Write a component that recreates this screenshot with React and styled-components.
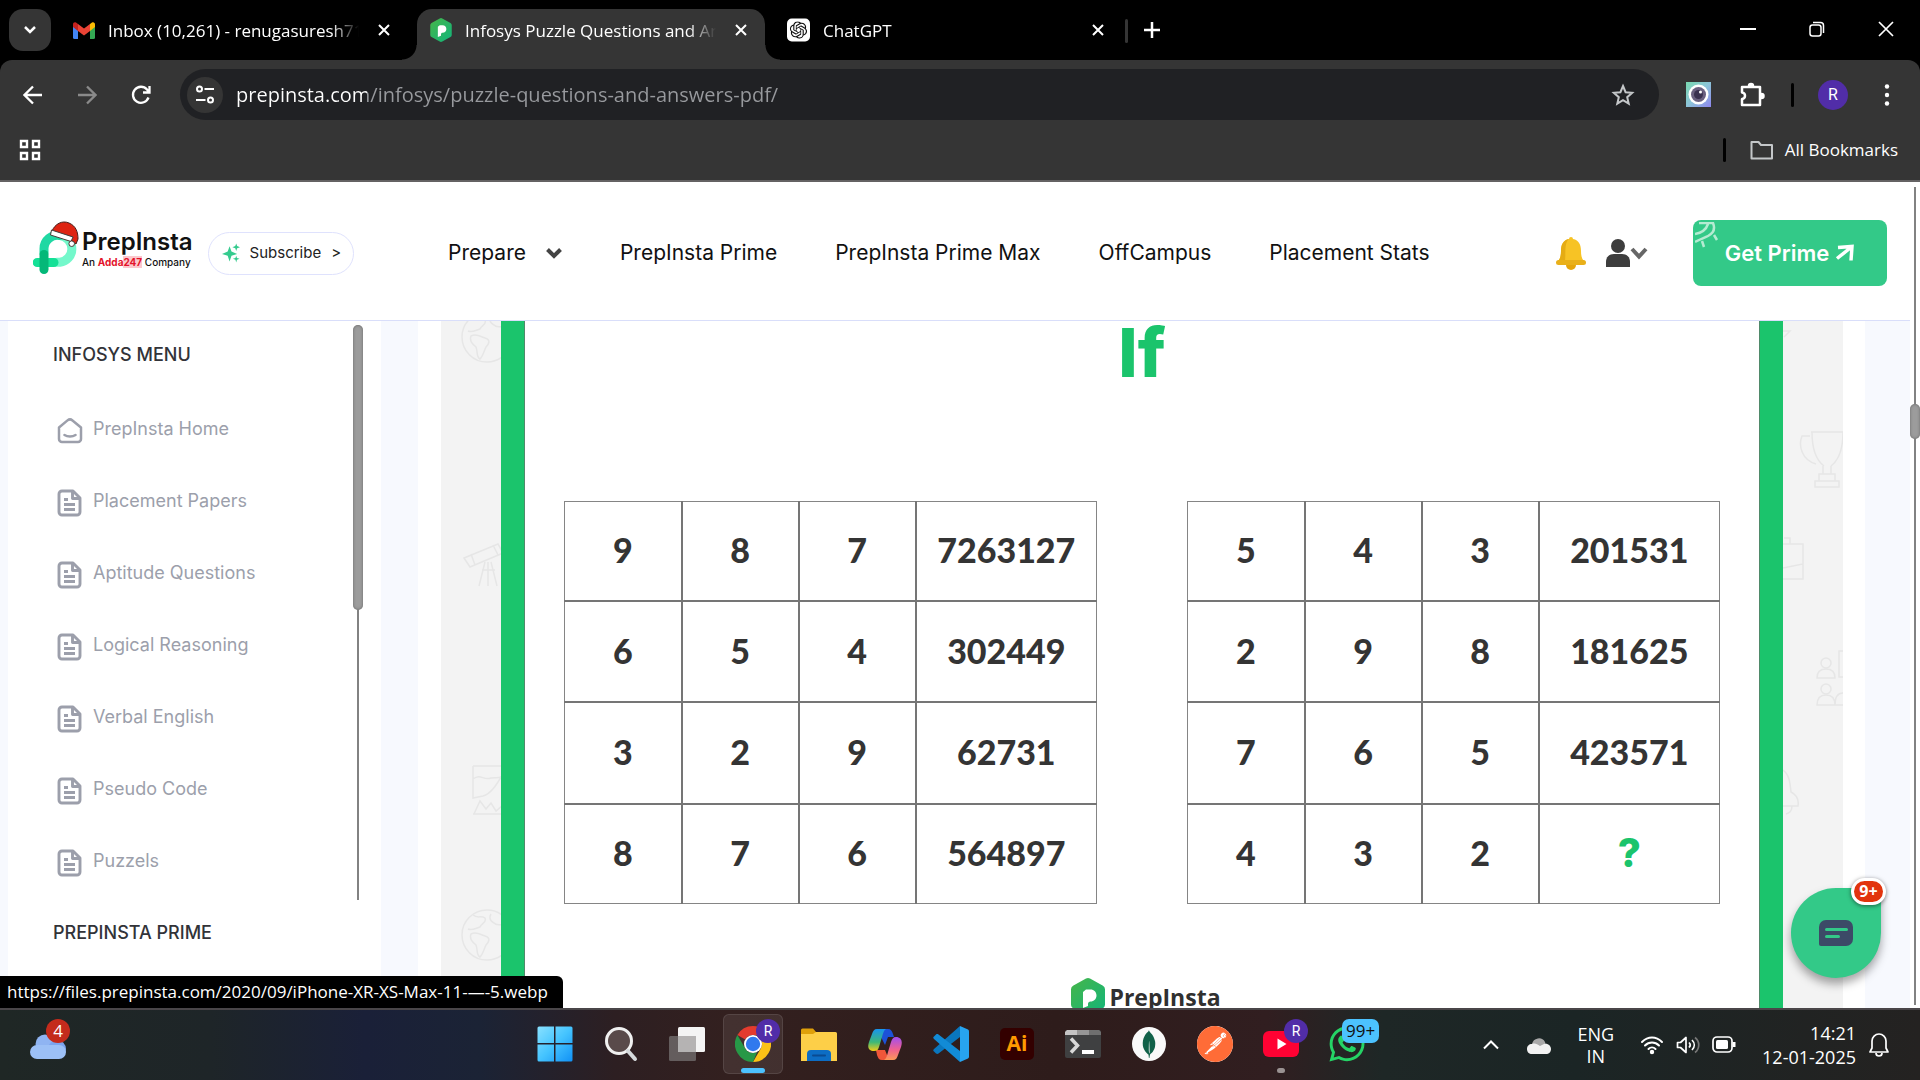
import React from "react";
import styled, { createGlobalStyle, css } from "styled-components";
import { SiOpenai, SiPostman, SiMongodb } from "react-icons/si";
import { FaWhatsapp } from "react-icons/fa";

const system = `"Open Sans", "Noto Sans", sans-serif`;
const site = `Inter, "Noto Sans", sans-serif`;

const Global = createGlobalStyle`
  *, *::before, *::after { box-sizing: border-box; }
  body { margin: 0; background: #000; font-family: ${system}; }
  button { border: 0; padding: 0; background: none; color: inherit; font: inherit; cursor: pointer; }
  a { color: inherit; text-decoration: none; }
  svg { display: block; flex: none; }
  ul { list-style: none; margin: 0; padding: 0; }
`;

const Screen = styled.div`
  display: flex;
  flex-direction: column;
  height: 100vh;
  overflow: hidden;
`;

/* ---------- browser chrome ---------- */

const TabStrip = styled.div`
  display: flex;
  align-items: stretch;
  height: 60px;
  padding-left: 9px;
  background: #000;
  color: #fff;
`;

const TabSearch = styled.button`
  display: grid;
  place-items: center;
  width: 42px;
  height: 42px;
  margin: 9px 9px 0 0;
  border-radius: 14px;
  background: #353535;
`;

const TabList = styled.div`
  display: flex;
  flex: 0 1 1062px;
  gap: 9px;
  min-width: 0;
`;

const flare = css`
  &::before,
  &::after {
    content: "";
    position: absolute;
    bottom: 0;
    width: 15px;
    height: 15px;
  }
  &::before {
    right: 100%;
    background: radial-gradient(circle at 0 0, transparent 14px, #353535 15px);
  }
  &::after {
    left: 100%;
    background: radial-gradient(circle at 100% 0, transparent 14px, #353535 15px);
  }
`;

const Tab = styled.div`
  position: relative;
  display: flex;
  flex: 1 1 0;
  align-items: center;
  gap: 13px;
  min-width: 0;
  margin-top: 9px;
  padding: 0 12px 9px 13px;
  border-radius: 15px 15px 0 0;
  background: ${(p) => (p.$active ? "#353535" : "transparent")};
  ${(p) => p.$active && flare}
`;

const TabTitle = styled.span`
  flex: 1;
  min-width: 0;
  padding-top: 2px;
  overflow: hidden;
  white-space: nowrap;
  font-size: 17px;
  line-height: 24px;
  mask-image: linear-gradient(90deg, #000 calc(100% - 28px), transparent);
`;

const TabClose = styled.button`
  display: grid;
  place-items: center;
  width: 24px;
  height: 24px;
`;

const StripDivider = styled.span`
  width: 3px;
  height: 24px;
  margin: 19px 12px 0 3px;
  border-radius: 2px;
  background: #353535;
`;

const NewTab = styled.button`
  display: grid;
  place-items: center;
  width: 24px;
  height: 60px;
`;

const WindowControls = styled.div`
  display: flex;
  margin-left: auto;
`;

const WindowButton = styled.button`
  display: grid;
  place-items: center;
  width: 69px;
  height: 58px;
`;

const Toolbar = styled.div`
  border-radius: 12px 12px 0 0;
  border-bottom: 2px solid #646263;
  background: #353535;
  color: #fff;
`;

const NavRow = styled.div`
  display: flex;
  align-items: center;
  gap: 12px;
  height: 69px;
  padding: 0 12px;
`;

const ToolButton = styled.button`
  display: grid;
  place-items: center;
  width: 42px;
  height: 42px;
  color: ${(p) => (p.$dim ? "#8a8a8a" : "#fff")};
`;

const Omnibox = styled.form`
  display: flex;
  flex: 1;
  align-items: center;
  height: 51px;
  margin: 0 6px;
  padding: 0 15px 0 7px;
  border-radius: 26px;
  background: #202124;
`;

const SiteInfo = styled.button`
  display: grid;
  place-items: center;
  width: 36px;
  height: 36px;
  border-radius: 50%;
  background: #353535;
`;

const Address = styled.input`
  flex: 1;
  min-width: 0;
  height: 36px;
  margin: 0 13px;
  padding: 0;
  border: 0;
  outline: 0;
  background: linear-gradient(90deg, #fff 131px, #989a9e 131px);
  background-clip: text;
  -webkit-background-clip: text;
  color: transparent;
  font: 400 20px/36px ${system};
`;

const ToolDivider = styled.span`
  width: 3px;
  height: 24px;
  margin: 0 6px;
  border-radius: 2px;
  background: #000;
`;

const Avatar = styled.span`
  display: grid;
  place-items: center;
  width: ${(p) => p.$size}px;
  height: ${(p) => p.$size}px;
  border-radius: 50%;
  background: #512da8;
  color: #fff;
  font: 400 ${(p) => (p.$size > 26 ? 16 : 14)}px/1 Roboto, sans-serif;
`;

const BookmarkRow = styled.div`
  display: flex;
  align-items: center;
  height: 51px;
  padding: 0 22px 9px 18px;
`;

const AllBookmarks = styled.button`
  display: flex;
  align-items: center;
  gap: 11px;
  font-size: 17px;
  line-height: 24px;
`;

const BookmarkDivider = styled(ToolDivider)`
  margin: 0 24px 0 auto;
`;

/* ---------- web page ---------- */

const Viewport = styled.div`
  position: relative;
  display: flex;
  flex: 1;
  min-height: 0;
  overflow: hidden;
  background: #fff;
`;

const Page = styled.div`
  display: flex;
  flex: 1;
  flex-direction: column;
  min-width: 0;
  font-family: ${site};
`;

const SiteHeader = styled.header`
  display: flex;
  flex: none;
  align-items: center;
  height: 139px;
  padding: 4px 23px 0 33px;
  border-bottom: 1px solid #d9defa;
  background: #fff;
  color: #111;
`;

const Brand = styled.a`
  display: flex;
  align-items: center;
  gap: 1px;
  padding-bottom: 12px;
`;

const BrandText = styled.span`
  display: flex;
  flex-direction: column;
  padding-top: 6px;
`;

const BrandName = styled.span`
  font-size: 24px;
  font-weight: 600;
  line-height: 24px;
`;

const BrandNote = styled.span`
  font-size: 10px;
  font-weight: 500;
  line-height: 16px;
`;

const Adda = styled.b`
  color: #e3122a;
  span {
    background: #fbc8cd;
  }
`;

const Subscribe = styled.a`
  display: flex;
  align-items: center;
  gap: 10px;
  height: 43px;
  margin-left: 15px;
  padding: 0 12px 0 13px;
  border: 1px solid #dfe2fd;
  border-radius: 22px;
  font-size: 15px;
  line-height: 24px;
  color: #222;
`;

const SiteNav = styled.nav`
  display: flex;
  gap: 58px;
  margin-left: 94px;
  font-size: 21px;
  line-height: 30px;
  white-space: nowrap;
`;

const NavLink = styled.a`
  display: flex;
  align-items: center;
  gap: 20px;
`;

const HeaderActions = styled.div`
  display: flex;
  align-items: center;
  margin-left: auto;
`;

const UserMenu = styled.button`
  display: flex;
  align-items: center;
  margin: 0 45px 0 19px;
`;

const PrimeButton = styled.a`
  position: relative;
  display: flex;
  align-items: center;
  justify-content: center;
  gap: 6px;
  width: 194px;
  height: 66px;
  border-radius: 8px;
  background: #33c988;
  color: #fff;
  font-size: 22px;
  font-weight: 600;
  line-height: 30px;
`;

const Rocket = styled.svg`
  position: absolute;
  top: 2px;
  left: 2px;
`;

const Columns = styled.div`
  display: flex;
  flex: 1;
  min-height: 0;
  padding: 0 45px 0 8px;
  overflow: hidden;
  background: #f7f9fe;
`;

const Sidebar = styled.aside`
  flex: none;
  width: 373px;
  margin-right: 37px;
  padding: 4px 18px 0 45px;
  background: #fff;
`;

const MenuScroller = styled.section`
  display: flex;
  justify-content: space-between;
  margin-bottom: 21px;
`;

const MenuTitle = styled.h2`
  margin: 0;
  color: #323338;
  font-size: 18px;
  font-weight: 500;
  line-height: 24px;
`;

const MenuBody = styled.div`
  padding: 18px 0 3px;
`;

const MenuList = styled.ul`
  padding: 26px 0 0 4px;
`;

const MenuLink = styled.a`
  display: flex;
  align-items: center;
  gap: 10px;
  height: 72px;
  color: #9c9fab;
  font-size: 18px;
  line-height: 24px;
  svg {
    margin-top: 4px;
  }
`;

const ScrollTrack = styled.div`
  position: relative;
  flex: none;
  width: 10px;
  background: linear-gradient(#828282, #828282) center / 2px 100% no-repeat;
`;

const ScrollThumb = styled.div`
  height: ${(p) => p.$size}px;
  margin-top: ${(p) => p.$start}px;
  border-radius: 5px;
  background: #9c9c9c;
  box-shadow: inset 0 0 3px #666;
`;

const PageScroll = styled(ScrollTrack)`
  display: flow-root;
  margin: 5px 0 3px;
`;

const Article = styled.main`
  display: flex;
  flex: 1;
  min-width: 0;
  padding: 0 22px 0 23px;
  background: #fff;
`;

const Figure = styled.section`
  display: flex;
  flex: 1;
  min-width: 0;
  background: #f3f3f3;
`;

const Margin = styled.div`
  flex: none;
  width: 60px;
  overflow: hidden;
`;

const Board = styled.div`
  flex: 1;
  min-width: 0;
  border: solid #1bc46c;
  border-width: 0 23px;
  background: #fff;
  box-shadow: inset 1px 0 #4f8a6a, inset -1px 0 #4f8a6a;
`;

const BoardTitle = styled.h1`
  margin: 0 0 118px;
  color: #1bc46c;
  font-size: 68px;
  font-weight: 800;
  line-height: 62px;
  text-align: center;
`;

const Tables = styled.div`
  display: grid;
  grid-template-columns: 1fr 1fr;
  gap: 90px;
  padding: 0 40px;
`;

const NumberTable = styled.table`
  width: 100%;
  height: 403px;
  border-collapse: collapse;
  table-layout: fixed;
  border: 1px solid #858585;
  tr + tr td {
    border-top: 2px solid #757575;
  }
  td + td {
    border-left: 2px solid #757575;
  }
`;

const Cell = styled.td`
  width: ${(p) => (p.$wide ? 34 : 22)}%;
  padding: 0 0 2px;
  color: ${(p) => (p.$answer ? "#1bc46c" : "#343434")};
  font-family: ${(p) => (p.$answer ? site : "Lato, sans-serif")};
  font-size: ${(p) => (p.$answer ? 40 : 34)}px;
  font-weight: ${(p) => (p.$answer ? 800 : 900)};
  line-height: 40px;
  text-align: center;
`;

const BoardLogo = styled.div`
  display: flex;
  align-items: center;
  justify-content: center;
  gap: 4px;
  height: 40px;
  margin-top: 73px;
  padding-left: 8px;
  color: #303030;
  font: 700 23px/40px ${system};
`;

const ChatButton = styled.button`
  position: absolute;
  right: 39px;
  bottom: 30px;
  display: grid;
  place-items: center;
  width: 90px;
  height: 90px;
  border-radius: 50% 8px 50% 50%;
  background: #33c988;
  box-shadow: 0 6px 10px rgba(0, 0, 0, 0.35);
`;

const ChatCount = styled.span`
  position: absolute;
  top: -10px;
  right: -5px;
  min-width: 35px;
  padding: 0 4px;
  border: 3px solid #fff;
  border-radius: 14px;
  background: #e2340d;
  box-shadow: 0 1px 4px rgba(0, 0, 0, 0.5);
  color: #fff;
  font: 700 16px/21px ${system};
`;

const StatusBubble = styled.div`
  position: absolute;
  bottom: 0;
  left: 0;
  padding: 4px 15px 4px 7px;
  border-radius: 0 6px 0 0;
  background: #000;
  color: #fff;
  font-size: 17px;
  line-height: 24px;
`;

/* ---------- taskbar ---------- */

const Taskbar = styled.footer`
  display: flex;
  flex: none;
  height: 72px;
  border-top: 2px solid #4a4649;
  background: linear-gradient(90deg, #1f2725 0%, #1e2528 11%, #1a2038 19%, #1b2335 25%, #2d1f22 32%, #33201f 38%, #2e1c1b 55%, #311e20 66%, #1e2726 72%, #1b2525 82%, #242221 100%);
  color: #fff;
`;

const TaskSide = styled.div`
  display: flex;
  flex: 1 1 0;
  align-items: center;
`;

const Tray = styled(TaskSide)`
  justify-content: flex-end;
  gap: 26px;
  padding-right: 30px;
  font-size: 18px;
  line-height: 24px;
`;

const TrayGroup = styled.div`
  display: flex;
  align-items: center;
  gap: 12px;
`;

const TrayText = styled.div`
  text-align: ${(p) => p.$align};
  line-height: ${(p) => (p.$align === "center" ? 22 : 24)}px;
`;

const Apps = styled.div`
  display: flex;
  padding-left: 12px;
`;

const AppButton = styled.button`
  position: relative;
  display: grid;
  place-items: center;
  width: 66px;
  height: 68px;
`;

const ActiveApp = styled.span`
  display: grid;
  place-items: center;
  width: 60px;
  height: 60px;
  border: 1px solid rgba(255, 255, 255, 0.1);
  border-radius: 6px;
  background: rgba(255, 255, 255, 0.08);
`;

const AppBadge = styled.span`
  position: absolute;
  top: 9px;
  left: ${(p) => (p.$count ? 28 : 36)}px;
`;

const Running = styled.span`
  position: absolute;
  bottom: 5px;
  width: ${(p) => (p.$active ? 24 : 8)}px;
  height: 5px;
  border-radius: 3px;
  background: ${(p) => (p.$active ? "#4cc2ff" : "#9a9292")};
`;

const CountBadge = styled.span`
  display: grid;
  place-items: center;
  min-width: 24px;
  height: 24px;
  padding: 0 4px;
  border-radius: ${(p) => (p.$round ? 12 : 7)}px;
  background: ${(p) => (p.$round ? "#c42b1c" : "#4cc2ff")};
  color: ${(p) => (p.$round ? "#fff" : "#111")};
  font: 400 17px/24px ${system};
`;

const WidgetBadge = styled.span`
  position: absolute;
  top: 8px;
  left: 31px;
`;

const WidgetButton = styled(AppButton)`
  margin-left: 15px;
`;

const IllustratorTile = styled.span`
  display: grid;
  place-items: center;
  width: 34px;
  height: 32px;
  padding-bottom: 3px;
  border-radius: 5px;
  background: #330000;
  color: #ff9a00;
  font: 700 21px/28px ${system};
`;

const MongoTile = styled.span`
  display: grid;
  place-items: center;
  width: 34px;
  height: 34px;
  border-radius: 50%;
  background: #f9f9f9;
  color: #116149;
`;

const PostmanTile = styled(MongoTile)`
  width: 36px;
  height: 36px;
  background: #fff;
  color: #ff6c37;
`;

/* ---------- drawings ---------- */

const Stroke = ({ w, h = w, d, sw = 2, box, children, ...rest }) => (
  <svg width={w} height={h} viewBox={box || `0 0 ${w} ${h}`} fill="none" stroke="currentColor" strokeWidth={sw} aria-hidden="true" {...rest}>
    {d && <path d={d} />}
    {children}
  </svg>
);

const Gmail = () => (
  <svg width="22" height="17" viewBox="0 0 22 17" aria-hidden="true">
    <path fill="#4285f4" d="M0 4l5 4v9H1.500A1.500 1.500 0 0 1 0 15.500z" />
    <path fill="#34a853" d="M22 4l-5 4v9h3.500a1.500 1.500 0 0 0 1.500-1.500z" />
    <path fill="#fbbc04" d="M17 2l2-1.500c1.500-.8 3 .2 3 2V5l-5 4z" />
    <path fill="#ea4335" d="M5 9V2l6 4.600L17 2v7l-6 4.600z" />
    <path fill="#c5221f" d="M0 5V2.500C0 .7 1.600-.3 3 .6L5 2v7z" />
  </svg>
);

const Hex = ({ w, h }) => (
  <svg width={w} height={h} viewBox="0 0 34 38" aria-hidden="true">
    <defs>
      <linearGradient id={`hex${w}`} x1="0" x2="1" y1="0" y2="1">
        <stop offset="0" stopColor="#46b549" />
        <stop offset="1" stopColor="#12b57b" />
      </linearGradient>
    </defs>
    <path fill={`url(#hex${w})`} d="M15 .6a4 4 0 0 1 4 0l13 7.200a4 4 0 0 1 2 3.400v15.600a4 4 0 0 1-2 3.400L19 37.400a4 4 0 0 1-4 0L2 30.200a4 4 0 0 1-2-3.400V11.200a4 4 0 0 1 2-3.400z" />
    <path fill="#fff" d="M12 14l3-2.500h4.500c3.500 0 6 2.600 6 6s-2.500 6-6 6c-1.500 0-2.500 1-2.500 2.500V28l-5 2z" />
  </svg>
);

const Close = () => <Stroke w={12} sw={2} d="M1 1l10 10M11 1L1 11" />;

const BrandMark = () => (
  <svg width="48" height="54" viewBox="0 0 48 54" fill="none" aria-hidden="true">
    <path d="M27 15.500A13.500 13.500 0 0 1 27 42.300H24" stroke="#74f8cb" strokeWidth="9" strokeLinecap="round" />
    <path d="M4.200 42.500H21" stroke="#14e096" strokeWidth="9" strokeLinecap="round" />
    <path d="M11 33v-4A13.500 13.500 0 0 1 27 15.500" stroke="#20d8a3" strokeWidth="9" strokeLinecap="round" />
    <path d="M11 34.500v15" stroke="#04b878" strokeWidth="9" strokeLinecap="round" />
    <path d="M19 11C22 4 29 0 36 3c7 3 9 9 9 16l-2 5-5-4 2-3z" fill="#de2412" stroke="#46211c" />
    <path d="M18.500 10L40 17l-2 4.500L17.500 15z" fill="#fff" stroke="#4a3b38" />
    <circle cx="38.700" cy="23.700" r="2.800" fill="#fff" stroke="#4a3b38" />
  </svg>
);

const Sparkles = () => (
  <svg width="18" height="20" viewBox="0 0 19 20" fill="#35cb8e" aria-hidden="true">
    <path d="M8 3l2 5.500L16 11l-6 2-2 6-2-6-6-2 6-2.500zM15 0l1 2.500L19 4l-3 1-1 3-1-3-3-1 3-1.500zM15 13l.8 2.200L18.500 16l-2.700 1-.8 3-.8-3-2.700-1 2.700-.8z" />
  </svg>
);

const BellGold = () => (
  <svg width="32" height="34" viewBox="0 0 32 34" aria-hidden="true">
    <circle cx="16" cy="29" r="5" fill="#e5a50c" />
    <path fill="#f7c325" d="M14 3a2 2 0 0 1 4 0c6 1 8 6 8 12 0 5 1 8 3 10H3c2-2 3-5 3-10C6 9 8 4 14 3z" />
    <path fill="#e5ac14" d="M14 3c-6 1-8 6-8 12 0 5-1 8-3 10h7c1-8-1-18 4-22z" />
    <rect y="24" x="1" width="30" height="5" rx="2.500" fill="#e9b01a" />
  </svg>
);

const HomeIcon = () => (
  <Stroke w={26} sw={2.500} strokeLinejoin="round" strokeLinecap="round" d="M2 9.500L10.500 2.400a4 4 0 0 1 5 0L24 9.500V21a3 3 0 0 1-3 3H5a3 3 0 0 1-3-3zM7.500 17c3 2 8 2 11 0" />
);

const DocIcon = () => (
  <Stroke w={26} h={28} sw={2.900} strokeLinejoin="round" d="M5 2h11l7 7v14a3 3 0 0 1-3 3H5a3 3 0 0 1-3-3V5a3 3 0 0 1 3-3zM15.500 2v7.500H23M7 10.500h4M7 15.500h11M7 20.500h11" />
);

const doodle = { fill: "none", stroke: "#e6e6e6", strokeWidth: 1.5, "aria-hidden": true };

const Globe = ({ y }) => (
  <g transform={`translate(46 ${y})`}>
    <circle r="25" />
    <path d="M-14-20c5 4 8 0 12 3 2 4-3 5-5 9-4 1-8 4-12 2M-16-1c6-3 10 1 14 2 6 2 4 6 1 9-2 4-3 9-6 12-4-2-2-7-4-12-4-3-7-6-5-11zM4-21c-3 5 1 8 3 9 3 4 9 0 12 2" />
  </g>
);

const LeftDoodles = () => (
  <svg width="60" height="687" {...doodle}>
    <Globe y={16} />
    <path d="M23 237l34-14 5 9-33 14zM30 233l4 11M52 224l5 10M44 241l-6 24M47 241v24M50 241l6 24M41 249h13" />
    <path d="M32 445h30M32 445v32l10-2c8-2 14-12 20-22M32 458c8-6 10 2 18-1 5-1 7 1 12-2M32 493h30M33 493l6-13 6 8 5-6 5 8 6-5" />
    <Globe y={614} />
  </svg>
);

const RightDoodles = () => (
  <svg width="60" height="687" {...doodle}>
    <path d="M0 10h7l-6 6" />
    <path d="M28 111h34M29 111c0 18 4 28 12 34M27 115h-8c-4 10 0 24 14 28M60 111c0 18-4 28-12 34M40 145v8M48 145v8M36 153h16v7H36zM32 160h24v6H32z" />
    <path d="M0 223h20v20L0 247M20 243v15H0M1 217h6v6" />
    <circle cx="43" cy="342" r="5" />
    <path d="M34 357c0-6 3-9 9-9s9 3 9 9zM60 330h-4v26h4" />
    <circle cx="43" cy="368" r="5" />
    <path d="M34 384c0-7 3-10 9-10s9 3 9 10zM60 372c-6 0-8 5-8 12h8M0 449c6 4 7 12 8 22 6 3 8 8 7 14H0M3 493c4-1 6-4 6-8" />
  </svg>
);

const WindowsLogo = () => (
  <svg width="36" height="36" viewBox="0 0 36 36" aria-hidden="true">
    <defs>
      <linearGradient id="win" gradientUnits="userSpaceOnUse" x1="0" y1="0" x2="36" y2="36">
        <stop offset="0" stopColor="#8be2ff" />
        <stop offset=".5" stopColor="#45c4ff" />
        <stop offset="1" stopColor="#0f90f5" />
      </linearGradient>
    </defs>
    <path fill="url(#win)" d="M2 .500h15v16.500H.500V2A1.500 1.500 0 0 1 2 .500zM18.500.500H34A1.500 1.500 0 0 1 35.500 2v15h-17zM.500 18.500H17v17H2A1.500 1.500 0 0 1 .500 34zM18.500 18.500h17V34a1.500 1.500 0 0 1-1.500 1.500H18.500z" />
  </svg>
);

const SearchLogo = () => (
  <svg width="36" height="36" viewBox="0 0 36 36" fill="none" aria-hidden="true">
    <circle cx="16" cy="15" r="12.500" stroke="#f0f0f0" strokeWidth="3" fill="#594a4a" />
    <path d="M25 25l7 8" stroke="#d5d9dc" strokeWidth="4" strokeLinecap="round" />
  </svg>
);

const TaskViewLogo = () => (
  <svg width="36" height="34" viewBox="0 0 36 34" aria-hidden="true">
    <rect x="9" width="27" height="25" rx="1.500" fill="#f4f4f4" />
    <rect y="9" width="27" height="25" rx="1.500" fill="#6d6868" fillOpacity=".85" />
    <path d="M9 9h18v16H9z" fill="#b5b3b3" />
  </svg>
);

const ChromeLogo = () => (
  <svg width="36" height="36" viewBox="0 0 36 36" aria-hidden="true">
    <path fill="#e33b2e" d="M18 0a18 18 0 0 1 15.600 9H18a9 9 0 0 0-7.800 4.500L2.400 9A18 18 0 0 1 18 0z" />
    <path fill="#fbc116" d="M33.600 9A18 18 0 0 1 18 36l7.800-13.500A9 9 0 0 0 25.800 13.500L23 9z" />
    <path fill="#279847" d="M2.400 9l7.800 13.500A9 9 0 0 0 18 27l4-.8L18 36A18 18 0 0 1 2.400 9z" />
    <circle cx="18" cy="18" r="9" fill="#fff" />
    <circle cx="18" cy="18" r="7.200" fill="#3079ee" />
  </svg>
);

const FolderLogo = () => (
  <svg width="36" height="33" viewBox="0 0 36 33" aria-hidden="true">
    <path fill="#dfa00a" d="M0 2a1.500 1.500 0 0 1 1.500-1.500H12L15 4v5H0z" />
    <path fill="#fdcf48" d="M0 6h12l3-2h19.500A1.500 1.500 0 0 1 36 5.500V33H0z" />
    <path fill="#0d6dc4" d="M6 33v-7a4 4 0 0 1 4-4h16a4 4 0 0 1 4 4v7z" />
    <path stroke="#0a4b91" strokeWidth="2" strokeLinecap="round" d="M12 27.500h12" />
  </svg>
);

const CopilotLogo = () => (
  <svg width="34" height="31" viewBox="0 0 34 31" aria-hidden="true">
    <defs>
      <linearGradient id="cpa" x1="0" y1="0" x2="0" y2="1">
        <stop offset="0" stopColor="#1794ef" />
        <stop offset=".6" stopColor="#3eb877" />
        <stop offset="1" stopColor="#f5cc17" />
      </linearGradient>
      <linearGradient id="cpb" x1="0" y1="0" x2="0" y2="1">
        <stop offset="0" stopColor="#a04ff0" />
        <stop offset=".55" stopColor="#f0618f" />
        <stop offset="1" stopColor="#fc9a57" />
      </linearGradient>
    </defs>
    <path fill="#1c52d8" d="M9 0h11c3 0 4 2 5 5l1 3h-6l-3 8z" />
    <path fill="#f0563a" d="M8 21h9l4 10h-7c-3 0-4-2-5-5z" />
    <path fill="url(#cpa)" d="M9 0h9c-2 1-3 4-4 8l-3 10c-1 3-2 4-5 4-5 0-7-3-5-9l3-8c1-3 2-5 5-5z" />
    <path fill="url(#cpb)" d="M25 31h-9c2-1 3-4 4-8l3-10c1-3 2-5 5-5 5 0 7 4 5 10l-3 8c-1 3-2 5-5 5z" />
  </svg>
);

const CodeLogo = () => (
  <svg width="36" height="36" viewBox="0 0 36 36" aria-hidden="true">
    <path fill="#0a76bd" d="M27 0L1 23c-1 1-1 2 0 2.500L3 27.500c1 .6 1.800.5 2.500 0L27 11z" />
    <path fill="#128bd6" d="M27 36L1 13c-1-1-1-2 0-2.500l2-2c1-.6 1.800-.5 2.500 0L27 25z" />
    <path fill="#27a4f0" d="M27 0l8 3.500a2 2 0 0 1 1 1.700v25.600a2 2 0 0 1-1 1.700L27 36z" />
  </svg>
);

const TerminalLogo = () => (
  <svg width="36" height="28" viewBox="0 0 36 28" aria-hidden="true">
    <rect width="36" height="28" rx="2" fill="#3f4041" />
    <path fill="#c4c4c4" d="M2 0h10v5H0V2z" />
    <path fill="#969696" d="M12 0h12v5H12z" />
    <path fill="#6f6f6f" d="M24 0h10l2 2v3H24z" />
    <path d="M6 8.500l6.500 7L6 22.500" fill="none" stroke="#d9d9d9" strokeWidth="3.500" />
    <path fill="#fff" d="M17 20h12v4H17z" />
  </svg>
);

const YouTubeLogo = () => (
  <svg width="36" height="26" viewBox="0 0 36 26" aria-hidden="true">
    <rect width="36" height="26" rx="6" fill="#ff0233" />
    <path fill="#fff" d="M14.500 7.500l9 5.500-9 5.500z" />
  </svg>
);

const WeatherLogo = () => (
  <svg width="36" height="30" viewBox="0 0 36 30" aria-hidden="true">
    <circle cx="26" cy="8" r="8" fill="#f57f17" />
    <circle cx="15" cy="14" r="9.500" fill="#8fb4f2" />
    <circle cx="27" cy="19" r="9" fill="#7ba4ee" />
    <rect y="15" width="36" height="14" rx="7" fill="#9cc0f6" />
  </svg>
);

const tabs = [
  { title: "Inbox (10,261) - renugasuresh71", icon: <Gmail /> },
  { title: "Infosys Puzzle Questions and Answers", icon: <Hex w={22} h={24} />, active: true },
  {
    title: "ChatGPT",
    icon: (
      <svg width="23" height="24" viewBox="0 0 24 24" aria-hidden="true">
        <rect width="24" height="24" rx="5" fill="#fff" />
        <SiOpenai x="3" y="3" size={18} color="#111" />
      </svg>
    ),
  },
];

const menu = ["PrepInsta Home", "Placement Papers", "Aptitude Questions", "Logical Reasoning", "Verbal English", "Pseudo Code", "Puzzels"];

const left = [
  ["9", "8", "7", "7263127"],
  ["6", "5", "4", "302449"],
  ["3", "2", "9", "62731"],
  ["8", "7", "6", "564897"],
];

const right = [
  ["5", "4", "3", "201531"],
  ["2", "9", "8", "181625"],
  ["7", "6", "5", "423571"],
  ["4", "3", "2", "?"],
];

const Grid = ({ rows }) => (
  <NumberTable>
    <tbody>
      {rows.map((row) => (
        <tr key={row.join()}>
          {row.map((value, i) => (
            <Cell key={i} $wide={i === 3} $answer={value === "?"}>
              {value}
            </Cell>
          ))}
        </tr>
      ))}
    </tbody>
  </NumberTable>
);

const BrowserChrome = () => (
  <>
    <TabStrip>
      <TabSearch aria-label="Search tabs">
        <Stroke w={14} h={10} sw={2.500} d="M2 2l5 5 5-5" />
      </TabSearch>
      <TabList>
        {tabs.map((t) => (
          <Tab key={t.title} $active={t.active}>
            {t.icon}
            <TabTitle>{t.title}</TabTitle>
            <TabClose aria-label="Close tab">
              <Close />
            </TabClose>
          </Tab>
        ))}
      </TabList>
      <StripDivider />
      <NewTab aria-label="New tab">
        <Stroke w={16} sw={2.500} d="M8 0v16M0 8h16" />
      </NewTab>
      <WindowControls>
        <WindowButton aria-label="Minimize">
          <Stroke w={16} sw={2} d="M0 8h16" />
        </WindowButton>
        <WindowButton aria-label="Restore">
          <Stroke w={16} sw={1.500}>
            <rect x="1" y="4" width="11" height="11" rx="2.500" />
            <path d="M4 1.500h7.500a3 3 0 0 1 3 3V12" />
          </Stroke>
        </WindowButton>
        <WindowButton aria-label="Close window">
          <Stroke w={16} sw={1.700} d="M1 1l14 14M15 1L1 15" />
        </WindowButton>
      </WindowControls>
    </TabStrip>
    <Toolbar>
      <NavRow>
        <ToolButton aria-label="Back">
          <Stroke w={20} sw={2.300} d="M19 10H2M10 1.500L1.500 10l8.500 8.500" />
        </ToolButton>
        <ToolButton aria-label="Forward" $dim>
          <Stroke w={20} sw={2.300} d="M1 10h17M10 1.500l8.500 8.500-8.500 8.500" />
        </ToolButton>
        <ToolButton aria-label="Reload">
          <Stroke w={20} sw={2.300} d="M17.500 12.500A8 8 0 1 1 16 4.500l2 2.500M18.500 1v6.500H12" />
        </ToolButton>
        <Omnibox onSubmit={(e) => e.preventDefault()}>
          <SiteInfo type="button" aria-label="Site information">
            <Stroke w={20} sw={2}>
              <circle cx="4.500" cy="4" r="2.500" />
              <circle cx="15.500" cy="15" r="2.500" />
              <path d="M9.500 4H19M1 15h9.500" />
            </Stroke>
          </SiteInfo>
          <Address aria-label="Address" defaultValue="prepinsta.com/infosys/puzzle-questions-and-answers-pdf/" />
          <ToolButton type="button" aria-label="Bookmark this page">
            <Stroke w={24} sw={2} color="#c4c7c9" d="M12 3l2.600 6.200 6.600.6-5 4.400 1.500 6.500L12 17.200l-5.700 3.500 1.500-6.500-5-4.400 6.600-.6z" />
          </ToolButton>
        </Omnibox>
        <ToolButton aria-label="Screen capture extension">
          <svg width="25" height="25" viewBox="0 0 25 25" aria-hidden="true">
            <defs>
              <linearGradient id="cam" x1="0" y1="0" x2="1" y2="1">
                <stop offset="0" stopColor="#79d9b0" />
                <stop offset=".5" stopColor="#8cc4d8" />
                <stop offset="1" stopColor="#8f86f0" />
              </linearGradient>
            </defs>
            <rect width="25" height="25" fill="url(#cam)" />
            <circle cx="12.500" cy="12.500" r="10" fill="#fff" />
            <circle cx="12.500" cy="12.500" r="7.500" fill="#6a6080" />
            <circle cx="12.500" cy="12.500" r="4.500" fill="#3a3150" />
            <circle cx="14.500" cy="10" r="1.500" fill="#fff" />
          </svg>
        </ToolButton>
        <ToolButton aria-label="Extensions">
          <Stroke w={26} sw={2.500} strokeLinejoin="round">
            <path d="M3 5h18v18H3v-6c4-.5 4-6 0-6.500z" />
            <path d="M10 4a2 2 0 0 1 4 0zM22.500 12a1.500 1.500 0 0 1 0 4z" fill="currentColor" />
          </Stroke>
        </ToolButton>
        <ToolDivider />
        <ToolButton aria-label="Profile">
          <Avatar $size={30}>R</Avatar>
        </ToolButton>
        <ToolButton aria-label="Browser menu">
          <svg width="6" height="22" viewBox="0 0 6 22" fill="currentColor" aria-hidden="true">
            <circle cx="3" cy="2.500" r="2.200" />
            <circle cx="3" cy="11" r="2.200" />
            <circle cx="3" cy="19.500" r="2.200" />
          </svg>
        </ToolButton>
      </NavRow>
      <BookmarkRow>
        <button aria-label="Apps">
          <Stroke w={24} sw={2.400} d="M3 3h6v6H3zM15 3h6v6h-6zM3 15h6v6H3zM15 15h6v6h-6z" />
        </button>
        <BookmarkDivider />
        <AllBookmarks>
          <Stroke w={24} h={20} sw={2} color="#c4c7c9" strokeLinejoin="round" d="M1.500 2h7l2.500 3h11v13.500h-20.500z" />
          All Bookmarks
        </AllBookmarks>
      </BookmarkRow>
    </Toolbar>
  </>
);

const WebPage = () => (
  <Viewport>
    <Page>
      <SiteHeader>
        <Brand href="#">
          <BrandMark />
          <BrandText>
            <BrandName>PrepInsta</BrandName>
            <BrandNote>
              An <Adda>Adda<span>247</span></Adda> Company
            </BrandNote>
          </BrandText>
        </Brand>
        <Subscribe href="#">
          <Sparkles />
          Subscribe
          <span>&gt;</span>
        </Subscribe>
        <SiteNav>
          <NavLink href="#">
            Prepare
            <Stroke w={16} h={12} sw={4} color="#444" d="M1.500 2.500L8 9l6.500-6.500" />
          </NavLink>
          <NavLink href="#">PrepInsta Prime</NavLink>
          <NavLink href="#">PrepInsta Prime Max</NavLink>
          <NavLink href="#">OffCampus</NavLink>
          <NavLink href="#">Placement Stats</NavLink>
        </SiteNav>
        <HeaderActions>
          <button aria-label="Notifications">
            <BellGold />
          </button>
          <UserMenu aria-label="Account">
            <svg width="24" height="28" viewBox="0 0 24 28" fill="#3d3d3d" aria-hidden="true">
              <circle cx="12" cy="7" r="7" />
              <path d="M0 28v-5c0-5 3-8 8-8h8c5 0 8 3 8 8v5z" />
            </svg>
            <Stroke w={18} h={14} sw={4} color="#666" d="M2 3l7 7.500L16 3" />
          </UserMenu>
          <PrimeButton href="#">
            <Rocket width="24" height="26" viewBox="0 0 24 26" fill="none" stroke="#b5ebd2" strokeWidth="2.500" aria-hidden="true">
              <path d="M4 1h14c2 5 1 10-5 13-4 2-8 3-13 6M0 12c6-1 11-4 13-10M7 19l2 6M19 13l3 5" />
            </Rocket>
            Get Prime
            <Stroke w={20} sw={3.500} d="M3 4.500l14-1-1 14M16.500 4L2 15.500" />
          </PrimeButton>
        </HeaderActions>
      </SiteHeader>
      <Columns>
        <Sidebar>
          <MenuScroller>
            <MenuBody>
              <MenuTitle>INFOSYS MENU</MenuTitle>
              <MenuList>
                {menu.map((item, i) => (
                  <li key={item}>
                    <MenuLink href="#">
                      {i === 0 ? <HomeIcon /> : <DocIcon />}
                      {item}
                    </MenuLink>
                  </li>
                ))}
              </MenuList>
            </MenuBody>
            <ScrollTrack>
              <ScrollThumb $start={0} $size={285} />
            </ScrollTrack>
          </MenuScroller>
          <MenuTitle>PREPINSTA PRIME</MenuTitle>
        </Sidebar>
        <Article>
          <Figure>
            <Margin>
              <LeftDoodles />
            </Margin>
            <Board>
              <BoardTitle>If</BoardTitle>
              <Tables>
                <Grid rows={left} />
                <Grid rows={right} />
              </Tables>
              <BoardLogo>
                <Hex w={34} h={38} />
                PrepInsta
              </BoardLogo>
            </Board>
            <Margin>
              <RightDoodles />
            </Margin>
          </Figure>
        </Article>
      </Columns>
    </Page>
    <PageScroll>
      <ScrollThumb $start={217} $size={35} />
    </PageScroll>
    <ChatButton aria-label="Open chat">
      <svg width="34" height="26" viewBox="0 0 34 26" aria-hidden="true">
        <path fill="#3c4a67" d="M7 0h20a7 7 0 0 1 7 7v12a7 7 0 0 1-7 7H2a2 2 0 0 1-2-2V7a7 7 0 0 1 7-7z" />
        <path stroke="#33c988" strokeWidth="3" strokeLinecap="round" d="M7.500 9.500h20M7.500 16.500h12" />
      </svg>
      <ChatCount>9+</ChatCount>
    </ChatButton>
    <StatusBubble>https://files.prepinsta.com/2020/09/iPhone-XR-XS-Max-11-—-5.webp</StatusBubble>
  </Viewport>
);

const apps = [
  { name: "Start", icon: <WindowsLogo /> },
  { name: "Search", icon: <SearchLogo /> },
  { name: "Task view", icon: <TaskViewLogo /> },
  { name: "Google Chrome", icon: <ActiveApp><ChromeLogo /></ActiveApp>, profile: true, active: true, running: true },
  { name: "File Explorer", icon: <FolderLogo /> },
  { name: "Copilot", icon: <CopilotLogo /> },
  { name: "Visual Studio Code", icon: <CodeLogo /> },
  { name: "Illustrator", icon: <IllustratorTile>Ai</IllustratorTile> },
  { name: "Terminal", icon: <TerminalLogo /> },
  { name: "MongoDB Compass", icon: <MongoTile><SiMongodb size={28} /></MongoTile> },
  { name: "Postman", icon: <PostmanTile><SiPostman size={36} /></PostmanTile> },
  { name: "YouTube", icon: <YouTubeLogo />, profile: true, running: true },
  { name: "WhatsApp", icon: <FaWhatsapp size={40} color="#25d366" />, count: "99+" },
];

const DesktopBar = () => (
  <Taskbar>
    <TaskSide>
      <WidgetButton aria-label="Widgets">
        <WeatherLogo />
        <WidgetBadge>
          <CountBadge $round>4</CountBadge>
        </WidgetBadge>
      </WidgetButton>
    </TaskSide>
    <Apps>
      {apps.map((app) => (
        <AppButton key={app.name} aria-label={app.name}>
          {app.icon}
          {app.running && <Running $active={app.active} />}
          {app.profile && (
            <AppBadge>
              <Avatar $size={24}>R</Avatar>
            </AppBadge>
          )}
          {app.count && (
            <AppBadge $count>
              <CountBadge>{app.count}</CountBadge>
            </AppBadge>
          )}
        </AppButton>
      ))}
    </Apps>
    <Tray>
      <button aria-label="Show hidden icons">
        <Stroke w={20} sw={2} d="M3 13.500l7-7 7 7" />
      </button>
      <svg width="24" height="20" viewBox="0 0 24 20" aria-hidden="true">
        <path fill="#a9a9a9" d="M5 9a7 7 0 0 1 13-2l1 4-12 5z" />
        <path fill="#f2f2f2" d="M5 9c3-1 5 0 8 2l4-2c4-1 7 2 7 5s-2 5-5 5H5c-3 0-5-2-5-5s2-5 5-5z" />
      </svg>
      <TrayText $align="center">
        ENG
        <br />
        IN
      </TrayText>
      <TrayGroup>
        <Stroke w={24} sw={2} strokeLinecap="round">
          <path d="M2 9c6-6 14-6 20 0M5 12.500c4-4 10-4 14 0M8.500 16c2-2 5-2 7 0" />
          <circle cx="12" cy="19" r="1.200" fill="currentColor" />
        </Stroke>
        <Stroke w={24} sw={1.700} strokeLinejoin="round">
          <path d="M1.500 9.500h3L10 4.500v15l-5.500-5h-3zM13 9.500c1.500 1.500 1.500 3.500 0 5M16 7c3 3 3 7 0 10" />
          <path d="M19 4.500c5 4 5 11 0 15" stroke="#777" />
        </Stroke>
        <Stroke w={24} sw={1.700}>
          <rect x="1" y="4" width="19" height="15" rx="4" />
          <rect x="4" y="7" width="12" height="9" rx="1.500" fill="currentColor" stroke="none" />
          <path d="M22 9v5" strokeWidth="3" />
        </Stroke>
      </TrayGroup>
      <TrayGroup>
        <TrayText $align="right">
          14:21
          <br />
          12-01-2025
        </TrayText>
        <button aria-label="Notification centre">
          <Stroke w={22} h={26} sw={1.700} strokeLinejoin="round" d="M11 2a7 7 0 0 1 7 7v7l2 4H2l2-4V9a7 7 0 0 1 7-7zM8 21c0 4 6 4 6 0" />
        </button>
      </TrayGroup>
    </Tray>
  </Taskbar>
);

export default function App() {
  return (
    <Screen>
      <Global />
      <BrowserChrome />
      <WebPage />
      <DesktopBar />
    </Screen>
  );
}
